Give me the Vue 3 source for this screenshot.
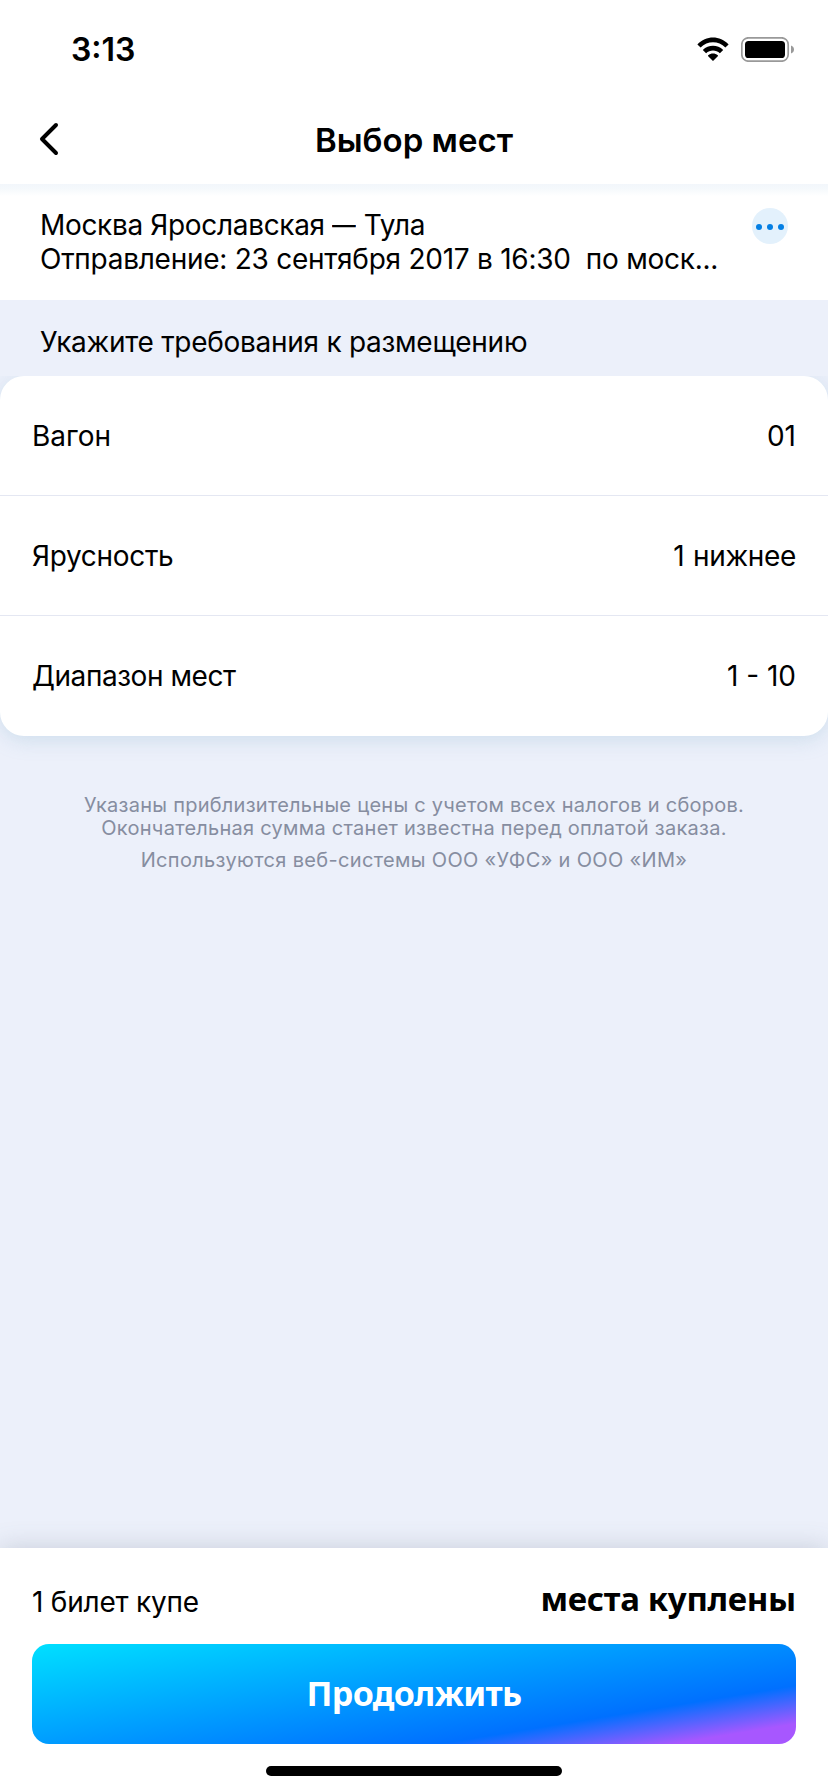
<script setup>
const rows = [
  { label: 'Вагон', value: '01', cls: 'r1' },
  { label: 'Ярусность', value: '1 нижнее', cls: 'r2' },
  { label: 'Диапазон мест', value: '1 - 10', cls: 'r3' },
]
</script>

<template>
  <div class="screen">
    <header class="top">
      <div class="status">
        <span class="time">3:13</span>
        <div class="indicators">
          <svg class="wifi" width="32" height="24" viewBox="0 0 32 24">
            <path d="M0.4 7.4C9-1.8 23-1.8 31.6 7.4L28.4 10.5C21.6 3.4 10.4 3.4 3.6 10.5Z" />
            <path d="M5.8 12.9C11.5 7.5 20.5 7.5 26.2 12.9L22.9 16.2C19 12.5 13 12.5 9.1 16.2Z" />
            <path d="M11.2 18.3C13.9 16 18.1 16 20.8 18.3C21.1 18.6 21.1 18.9 20.8 19.2L16 24L11.2 19.2C10.9 18.9 10.9 18.6 11.2 18.3Z" />
          </svg>
          <svg class="battery" width="53" height="25" viewBox="0 0 53 25">
            <rect x="0.8" y="0.8" width="46.4" height="23.4" rx="6.6" fill="none" stroke="#999" stroke-width="1.7" />
            <rect x="4" y="4" width="40" height="17" rx="3.6" />
            <path d="M50 8.5C52 9.2 53 10.7 53 12.5S52 15.8 50 16.5Z" fill="#999" />
          </svg>
        </div>
      </div>
      <nav class="nav">
        <svg class="back" width="20" height="34" viewBox="0 0 20 34">
          <path d="M17 3L3 17L17 31" fill="none" stroke="#000" stroke-width="4" stroke-linecap="round" stroke-linejoin="round" />
        </svg>
        <h1>Выбор мест</h1>
        <span class="side"></span>
      </nav>
    </header>

    <section class="trip">
      <div class="trip-text">
        <div class="route">Москва Ярославская <span class="dash">—</span> Тула</div>
        <div class="depart">Отправление: 23 сентября 2017 в 16:30&nbsp; по моск...</div>
      </div>
      <button class="more" aria-label="Ещё"><i></i><i></i><i></i></button>
    </section>

    <h2>Укажите требования к размещению</h2>

    <div class="card">
      <div v-for="row in rows" :key="row.label" class="row" :class="row.cls">
        <span class="label">{{ row.label }}</span>
        <span class="value">{{ row.value }}</span>
      </div>
    </div>

    <div class="notes">
      <p class="n1">Указаны приблизительные цены с учетом всех налогов и сборов.</p>
      <p class="n2">Окончательная сумма станет известна перед оплатой заказа.</p>
      <p class="n3">Используются веб-системы ООО «УФС» и ООО «ИМ»</p>
    </div>

    <footer class="footer">
      <div class="summary">
        <span class="ticket">1 билет купе</span>
        <strong>места куплены</strong>
      </div>
      <button class="next"><span>Продолжить</span></button>
      <div class="home"></div>
    </footer>
  </div>
</template>

<style>
body {
  margin: 0;
}
</style>

<style scoped>
.screen {
  display: flex;
  flex-direction: column;
  width: 828px;
  height: 1792px;
  overflow: hidden;
  background: #ecf0fa;
  color: #000;
  font: 400 28px/34px Inter, "Liberation Sans", sans-serif;
  white-space: nowrap;
}
.top {
  height: 184px;
  flex: none;
  background: #fff;
  display: flex;
  flex-direction: column;
}
.status {
  height: 98px;
  box-sizing: border-box;
  padding: 0 34px 0 71px;
  display: flex;
  align-items: center;
  justify-content: space-between;
}
.time {
  font-weight: 600;
  font-size: 32px;
  padding-top: 2px;
}
.indicators {
  display: flex;
  gap: 12px;
  align-items: center;
}
.wifi {
  margin-top: -1px;
}
.nav {
  height: 83px;
  display: flex;
  align-items: center;
  justify-content: space-between;
  padding: 0 39px;
}
.back {
  margin-bottom: 2px;
}
.side {
  width: 20px;
}
h1 {
  margin: 0;
  font-size: 33px;
  font-weight: 600;
}
.trip {
  height: 116px;
  flex: none;
  box-sizing: border-box;
  padding: 24px 40px 0;
  display: flex;
  justify-content: space-between;
  align-items: flex-start;
  background: linear-gradient(#f2f6fb, #f5f9fc 5px, #fff 12px);
}
.route {
  letter-spacing: -0.33px;
}
.dash {
  display: inline-block;
  width: 24px;
  transform: scaleX(0.85);
  transform-origin: left;
}
.depart {
  letter-spacing: -0.26px;
}
.more {
  width: 36px;
  height: 36px;
  border: 0;
  border-radius: 50%;
  padding: 2px 0 0;
  background: #e3f1fc;
  display: flex;
  align-items: center;
  justify-content: center;
  gap: 5px;
}
.more i {
  width: 6px;
  height: 6px;
  border-radius: 50%;
  background: #047fe4;
}
h2 {
  margin: 0;
  height: 76px;
  flex: none;
  box-sizing: border-box;
  padding: 25px 40px 0;
  font-size: 28px;
  font-weight: 400;
  letter-spacing: -0.28px;
}
.card {
  flex: none;
  background: #fff;
  border-radius: 24px;
  box-shadow: 0 4px 20px rgba(130, 175, 205, 0.28);
  clip-path: inset(0 0 -40px 0);
}
.row {
  height: 120px;
  box-sizing: border-box;
  padding: 0 32px 0 32px;
  display: flex;
  align-items: center;
  justify-content: space-between;
}
.row + .row {
  box-shadow: 0 -1px #e4e7f2;
}
.r2 {
  letter-spacing: -0.32px;
}
.r2 .value {
  word-spacing: 1px;
}
.r3 .label {
  letter-spacing: -0.44px;
}
.notes {
  padding-top: 58px;
  text-align: center;
  color: #868da0;
  font-size: 20px;
  line-height: 23px;
  letter-spacing: 0.26px;
}
.notes p {
  margin: 0;
}
.notes .n3 {
  margin-top: 9px;
  letter-spacing: 0.33px;
}
.footer {
  margin-top: auto;
  height: 244px;
  flex: none;
  box-sizing: border-box;
  padding: 0 32px;
  background: #fff;
  box-shadow: 0 0 24px rgba(90, 105, 125, 0.25);
  display: flex;
  flex-direction: column;
}
.summary {
  height: 96px;
  box-sizing: border-box;
  padding-top: 12px;
  display: flex;
  align-items: center;
  justify-content: space-between;
}
.ticket {
  letter-spacing: -0.22px;
}
strong {
  font: 700 33px/34px "Noto Sans", sans-serif;
  letter-spacing: -0.3px;
  margin-top: -7px;
}
.next {
  height: 100px;
  border: 0;
  padding: 0 0 3px;
  border-radius: 17px;
  color: #fff;
  font: 700 34px/34px "Noto Sans", sans-serif;
  letter-spacing: -0.7px;
  background: linear-gradient(170.7deg, #00e0ff 0%, #0070ff 74%, #a757ff 91%);
}
.home {
  width: 296px;
  height: 10px;
  margin: 22px auto 0;
  border-radius: 5px;
  background: #000;
}
</style>
